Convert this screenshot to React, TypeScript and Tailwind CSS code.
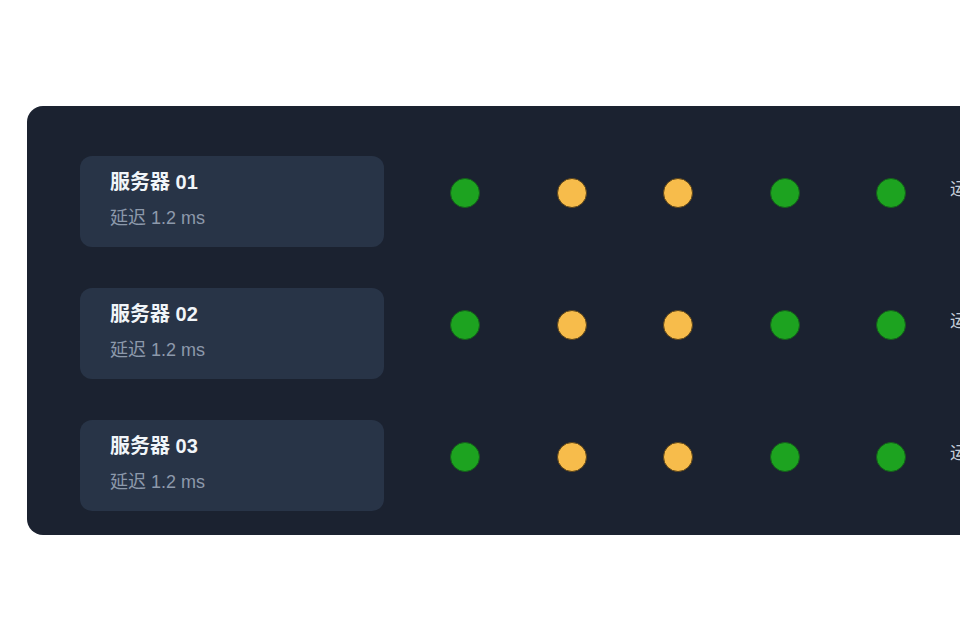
import React from "react";

const rows = [
  { name: "服务器 01", status: ["g", "y", "y", "g", "g"] },
  { name: "服务器 02", status: ["g", "y", "y", "g", "g"] },
  { name: "服务器 03", status: ["g", "y", "y", "g", "g"] },
];

function Dot({ c }: { c: string }) {
  return c === "g" ? (
    <div className="w-[30px] h-[30px] shrink-0 rounded-full bg-[#1da320] border border-[#14601a]" />
  ) : (
    <div className="w-[30px] h-[30px] shrink-0 rounded-full bg-[#f7bc4b] border border-[#5c4418]" />
  );
}

export default function App() {
  return (
    <div
      className="w-[960px] h-[640px] overflow-hidden bg-white pt-[106px] pl-[27px]"
      style={{ fontFamily: '"Liberation Sans", Arial, "Noto Sans CJK SC", sans-serif' }}
    >
      <div className="w-[1100px] h-[429px] rounded-[16px] bg-[#1b2230] pl-[53px] pt-[50px] flex flex-col gap-[41px]">
        {rows.map((r) => (
          <div key={r.name} className="flex items-start">
            <div className="w-[304px] h-[91px] shrink-0 rounded-[12px] bg-[#283447] pl-[30px] pt-[12px]">
              <div className="text-[20px] leading-[28px] font-bold text-[#f1f5f9] whitespace-nowrap">{r.name}</div>
              <div className="mt-[10px] text-[18px] leading-[24px] text-[#8d99ab] whitespace-nowrap">延迟 1.2 ms</div>
            </div>
            <div className="ml-[66px] mt-[22px] flex items-center gap-[76.5px]">
              {r.status.map((s, i) => (
                <Dot key={i} c={s} />
              ))}
            </div>
            <div className="ml-[44px] mt-[24px] text-[17px] leading-[20px] text-[#c4ccd8] whitespace-nowrap">
              运行中
            </div>
          </div>
        ))}
      </div>
    </div>
  );
}
